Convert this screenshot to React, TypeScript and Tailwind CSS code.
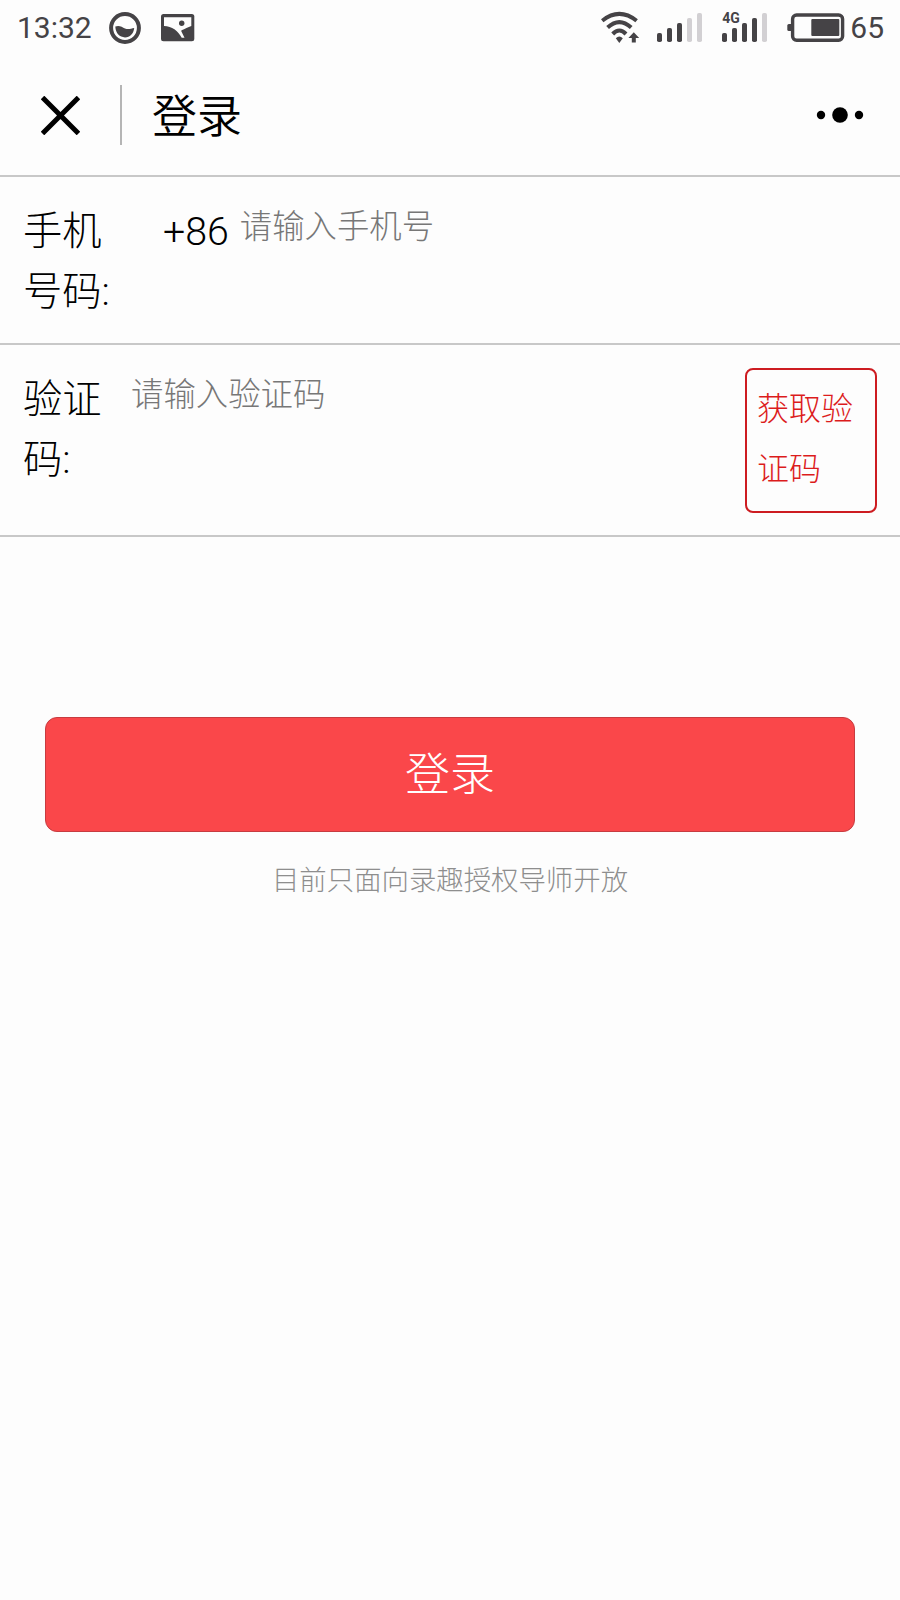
import type { ReactNode } from "react"

const SIGNAL_HEIGHTS = [9, 14, 19, 24, 29]

function SignalBars({ active }: { active: number }) {
  return (
    <svg width="46" height="30" viewBox="0 0 46 30">
      {SIGNAL_HEIGHTS.map((h, i) => (
        <rect
          key={i}
          x={i * 10}
          y={29 - h}
          width="5"
          height={h}
          rx="1.8"
          fill={i < active ? "#454346" : "#d2d0d3"}
        />
      ))}
    </svg>
  )
}

function FaceIcon() {
  return (
    <svg width="32" height="32" viewBox="0 0 32 32">
      <circle cx="16" cy="16" r="13.9" fill="none" stroke="#454346" strokeWidth="4" />
      <path d="M6.3 14.6 C10 12.8 13 15 16 16.4 C19 17.8 22 16.6 25.2 16 C24.6 21.8 21 25.4 16 25.4 C10.8 25.4 6.6 21.5 6.3 14.6 Z" fill="#454346" />
    </svg>
  )
}

function PictureIcon() {
  return (
    <svg width="34" height="28" viewBox="0 0 34 28">
      <rect width="33.3" height="27.3" rx="2.5" fill="#454346" />
      <path d="M3 3.2 H30.3 V12 C27 13 24 14.8 20.5 16.3 L20.3 17.3 L23.5 23.8 L20.7 23.8 C17 16.5 11 12.5 3 12 Z" fill="#fdfdfd" />
      <circle cx="20.7" cy="9.3" r="2.7" fill="#454346" />
    </svg>
  )
}

function WifiIcon() {
  return (
    <svg width="40" height="34" viewBox="0 0 40 34">
      <g fill="none" stroke="#454346" strokeWidth="4">
        <path d="M1.2 9.8 Q18.3 -4 35.6 9.8" />
        <path d="M6.6 16.5 Q18.3 5.7 30.2 16.5" />
        <path d="M11.7 23 Q18.3 16.1 25 23" />
      </g>
      <path d="M14.8 27.2 Q18.3 24 21.8 27.2 L18.3 32 Z" fill="#454346" />
      <path d="M32.8 21.3 L38.2 27 H34.8 V31.6 H30.8 V27 H27.4 Z" fill="#454346" />
    </svg>
  )
}

function BatteryIcon() {
  return (
    <svg width="58" height="30" viewBox="0 0 58 30">
      <rect x="5.6" y="2" width="50" height="25.2" rx="4" fill="none" stroke="#454346" strokeWidth="3.4" />
      <rect x="0.3" y="11" width="5" height="7" rx="1.5" fill="#454346" />
      <rect x="24.3" y="6" width="28" height="17" rx="1" fill="#454346" />
    </svg>
  )
}

function StatusBar() {
  return (
    <div className="flex h-[56px] items-center justify-between pl-[17px] pr-[16px] font-normal text-[#454346]">
      <div className="flex items-center">
        <span className="w-[75px] text-[30px] leading-[56px]">13:32</span>
        <div className="ml-[17px] flex">
          <FaceIcon />
        </div>
        <div className="ml-5 flex">
          <PictureIcon />
        </div>
      </div>
      <div className="flex items-center">
        <WifiIcon />
        <div className="ml-[16px] flex">
          <SignalBars active={3} />
        </div>
        <div className="relative ml-[19px] flex">
          <span className="absolute left-0 top-[-2px] text-[14px] font-bold leading-[14px]">4G</span>
          <SignalBars active={4} />
        </div>
        <div className="ml-[19px] flex">
          <BatteryIcon />
        </div>
        <span className="ml-[5px] text-[30px] leading-[56px]">65</span>
      </div>
    </div>
  )
}

function NavBar() {
  return (
    <header className="flex h-[119px] items-center pb-[2px] pl-[41px] pr-[36px]">
      <svg className="mt-[2px]" width="39" height="39" viewBox="0 0 39 39" fill="none" stroke="#000" strokeWidth="5">
        <path d="M1.5 1.5 L37.5 37.5 M37.5 1.5 L1.5 37.5" />
      </svg>
      <div className="ml-10 h-[60px] w-[2px] bg-[#b5b5b5]" />
      <h1 className="ml-[30px] pt-[6px] text-[45px] font-[350] leading-[60px] text-black">登录</h1>
      <svg className="ml-auto" width="48" height="16" viewBox="0 0 48 16">
        <circle cx="5" cy="8" r="4.2" />
        <circle cx="24" cy="8" r="7.8" />
        <circle cx="43" cy="8" r="4.2" />
      </svg>
    </header>
  )
}

function FormRow({ label, children }: { label: ReactNode; children: ReactNode }) {
  return (
    <div className="flex items-start border-b-2 border-[#c8c8c8] px-[23px] pb-[22px] pt-[23px]">
      <div className="h-[121px] w-[108px] pt-[2px] text-[39.3px] leading-[60px] text-black">{label}</div>
      {children}
    </div>
  )
}

export default function App() {
  return (
    <main className="min-h-[1600px] w-[900px] bg-[#fdfdfd] font-['Roboto','Noto_Sans_CJK_SC',sans-serif] font-light">
      <StatusBar />
      <NavBar />

      {/* Login form */}
      <section className="border-t-2 border-[#c8c8c8]">
        <FormRow label={<>手机<br />号码:</>}>
          <span className="ml-[32px] pt-[2px] text-[39.3px] leading-[60px] text-black">+86</span>
          <span className="ml-[11px] pt-[2px] text-[32.4px] leading-[50px] text-[#777]">请输入手机号</span>
        </FormRow>
        <FormRow label={<>验证<br />码:</>}>
          <span className="pt-[2px] text-[32.4px] leading-[50px] text-[#777]">请输入验证码</span>
          <button className="ml-auto h-[145px] w-[132px] rounded-[8px] border-[2.5px] border-[#cd1c21] pb-[4px] pl-[10px] text-left text-[32px] leading-[60px] text-[#dc1c1c]">
            获取验<br />证码
          </button>
        </FormRow>
      </section>

      <div className="px-[45px] pt-[180px]">
        <button className="h-[115px] w-full rounded-[12px] border border-[#c73c40] bg-[#fa474a] pt-[3px] text-[45px] text-white">
          登录
        </button>
        <p className="mt-[29px] text-center text-[27.4px] leading-[40px] text-[#8e8e8e]">目前只面向录趣授权导师开放</p>
      </div>
    </main>
  )
}
